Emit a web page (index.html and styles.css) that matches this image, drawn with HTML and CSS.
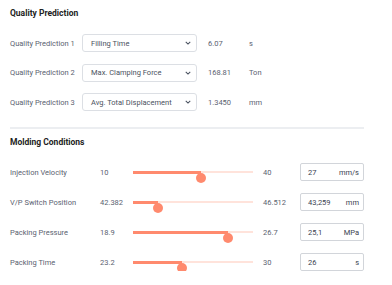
FILE: index.html
```html
<!DOCTYPE html>
<html lang="en">
<head>
    <meta charset="UTF-8">
    <title>Prediction Panel</title>
    <link rel="stylesheet" href="styles.css">
</head>
<body>
    <div class="panel">
        <h2 class="section-title">Quality Prediction</h2>
        <div class="quality-rows">
            <div class="quality-row">
                <span class="label">Quality Prediction 1</span>
                <div class="select">
                    <span>Filling Time</span>
                    <svg class="chevron" viewBox="0 0 8 5" width="6" height="4"><path d="M1 1l3 3 3-3" fill="none" stroke="#4a5260" stroke-width="1.4"/></svg>
                </div>
                <span class="value">6.07</span>
                <span class="unit">s</span>
            </div>
            <div class="quality-row">
                <span class="label">Quality Prediction 2</span>
                <div class="select">
                    <span>Max. Clamping Force</span>
                    <svg class="chevron" viewBox="0 0 8 5" width="6" height="4"><path d="M1 1l3 3 3-3" fill="none" stroke="#4a5260" stroke-width="1.4"/></svg>
                </div>
                <span class="value">168.81</span>
                <span class="unit">Ton</span>
            </div>
            <div class="quality-row">
                <span class="label">Quality Prediction 3</span>
                <div class="select">
                    <span>Avg. Total Displacement</span>
                    <svg class="chevron" viewBox="0 0 8 5" width="6" height="4"><path d="M1 1l3 3 3-3" fill="none" stroke="#4a5260" stroke-width="1.4"/></svg>
                </div>
                <span class="value">1.3450</span>
                <span class="unit">mm</span>
            </div>
        </div>

        <hr class="divider">

        <h2 class="section-title molding-title">Molding Conditions</h2>
        <div class="molding-rows">
            <div class="molding-row">
                <span class="label">Injection Velocity</span>
                <span class="min">10</span>
                <div class="slider"><div class="fill" style="width: 56.7%"><span class="thumb"></span></div></div>
                <span class="max">40</span>
                <div class="field"><span>27</span><span>mm/s</span></div>
            </div>
            <div class="molding-row">
                <span class="label">V/P Switch Position</span>
                <span class="min">42.382</span>
                <div class="slider"><div class="fill" style="width: 21.2%"><span class="thumb"></span></div></div>
                <span class="max">46.512</span>
                <div class="field"><span>43,259</span><span>mm</span></div>
            </div>
            <div class="molding-row">
                <span class="label">Packing Pressure</span>
                <span class="min">18.9</span>
                <div class="slider"><div class="fill" style="width: 79.5%"><span class="thumb"></span></div></div>
                <span class="max">26.7</span>
                <div class="field"><span>25,1</span><span>MPa</span></div>
            </div>
            <div class="molding-row">
                <span class="label">Packing Time</span>
                <span class="min">23.2</span>
                <div class="slider"><div class="fill" style="width: 41.2%"><span class="thumb"></span></div></div>
                <span class="max">30</span>
                <div class="field"><span>26</span><span>s</span></div>
            </div>
        </div>
    </div>
</body>
</html>
```
FILE: styles.css
```css
body {
    margin: 0;
    background-color: #fff;
    font-family: Roboto, "Noto Sans", sans-serif;
    color: #5a6270;
}
.panel {
    padding: 6px 10px 0 10px;
    width: 354px;
}
.section-title {
    font-size: 8.5px;
    font-weight: 700;
    color: #222;
    margin: 0;
    line-height: 14px;
}
.quality-rows {
    display: flex;
    flex-direction: column;
    gap: 11.5px;
    margin-top: 14px;
}
.quality-row {
    display: flex;
    align-items: center;
    height: 18px;
    font-size: 7.5px;
    white-space: nowrap;
}
.label {
    font-size: 7.5px;
    color: #5a6270;
}
.quality-row .label {
    width: 72px;
    flex-shrink: 0;
}
.select {
    width: 100px;
    height: 16px;
    border: 1px solid #dcdfe4;
    border-radius: 3px;
    display: flex;
    align-items: center;
    justify-content: space-between;
    padding: 0 5px 0 8px;
    flex-shrink: 0;
    color: #4a5260;
}
.quality-row .value {
    margin-left: 11px;
    width: 41px;
}
.divider {
    border: none;
    border-top: 2px solid #eceef1;
    margin: 16px 0 0 0;
}
.molding-title {
    margin-top: 6px;
}
.molding-rows {
    display: flex;
    flex-direction: column;
    gap: 12px;
    margin-top: 14px;
}
.molding-row {
    display: flex;
    align-items: center;
    height: 18px;
    font-size: 7.5px;
    white-space: nowrap;
}
.molding-row .label {
    width: 90px;
}
.min {
    width: 33px;
}
.max {
    width: 37px;
    margin-left: 10px;
}
.slider {
    position: relative;
    width: 120px;
    height: 2px;
    background-color: #ffe3db;
}
.fill {
    position: relative;
    height: 3px;
    margin-top: -0.5px;
    background-color: #ff8a6e;
}
.thumb {
    position: absolute;
    right: -5px;
    top: 2px;
    width: 10px;
    height: 10px;
    border-radius: 50%;
    background-color: #ff8a6e;
}
.field {
    width: 64px;
    height: 18px;
    border: 1px solid #d2d5da;
    border-radius: 2px;
    display: flex;
    align-items: center;
    justify-content: space-between;
    padding: 0 4px 0 7px;
    box-sizing: border-box;
    color: #3a4250;
    font-size: 7.5px;
}
```
